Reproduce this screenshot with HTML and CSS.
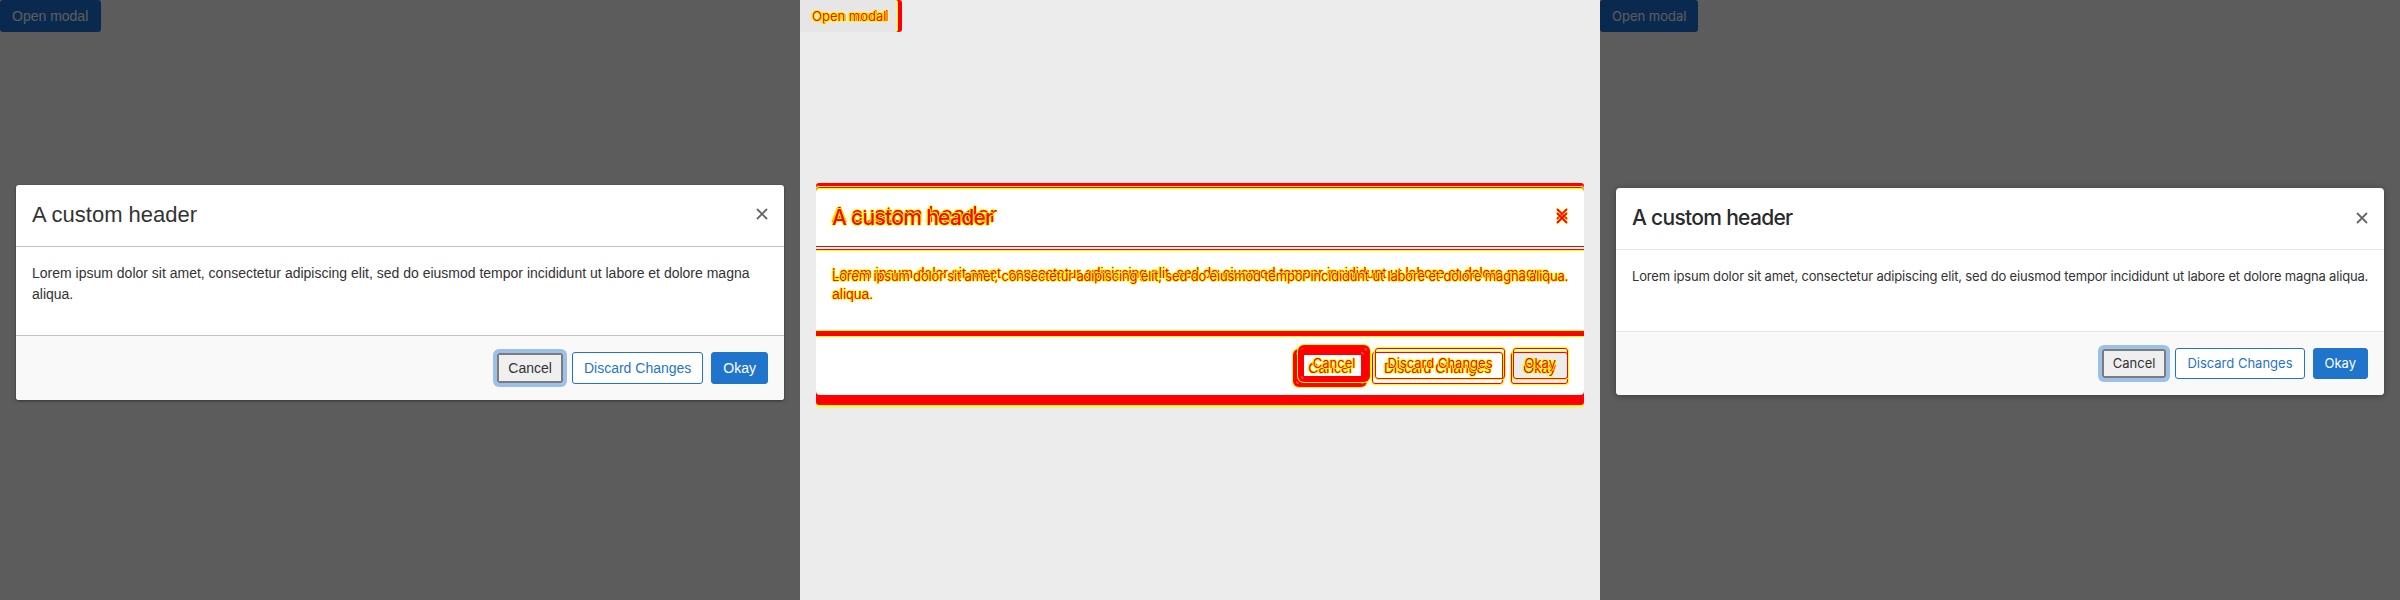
FILE: index.html
```html
<!DOCTYPE html>
<html lang="en">
<head>
<meta charset="utf-8">
<title>Modal visual diff</title>
<link rel="stylesheet" href="styles.css">
</head>
<body>
<div class="screen">

  <section class="panel v-expected">
    <div class="page"><button class="open-btn">Open modal</button></div>
    <div class="backdrop"></div>
    <div class="dialog-wrap">
      <div class="modal">
        <div class="modal-header">
          <h2 class="modal-title">A custom header</h2>
          <button class="close" aria-label="Close"><svg width="12" height="12" viewBox="0 0 12 12"><path d="M1.5 1.5l9 9M10.5 1.5l-9 9" stroke="currentColor" stroke-width="1.8" stroke-linecap="round" fill="none"/></svg></button>
        </div>
        <div class="modal-body"><p>Lorem ipsum dolor sit amet, consectetur adipiscing elit, sed do eiusmod tempor incididunt ut labore et dolore magna aliqua.</p></div>
        <div class="modal-footer">
          <button class="btn btn-cancel">Cancel</button>
          <button class="btn btn-outline">Discard Changes</button>
          <button class="btn btn-primary">Okay</button>
        </div>
      </div>
    </div>
  </section>

  <section class="panel panel-diff">
    <div class="layer diff v-expected diff-a">
      <div class="page"><button class="open-btn">Open modal</button></div>
      <div class="dialog-wrap">
        <div class="modal">
          <div class="modal-header">
            <h2 class="modal-title">A custom header</h2>
            <button class="close" aria-label="Close"><svg width="12" height="12" viewBox="0 0 12 12"><path d="M1.5 1.5l9 9M10.5 1.5l-9 9" stroke="currentColor" stroke-width="1.8" stroke-linecap="round" fill="none"/></svg></button>
          </div>
          <div class="modal-body"><p>Lorem ipsum dolor sit amet, consectetur adipiscing elit, sed do eiusmod tempor incididunt ut labore et dolore magna aliqua.</p></div>
          <div class="modal-footer">
            <button class="btn btn-cancel">Cancel</button>
            <button class="btn btn-outline">Discard Changes</button>
            <button class="btn btn-primary">Okay</button>
          </div>
        </div>
      </div>
    </div>
    <div class="layer diff v-actual diff-b">
      <div class="page"><button class="open-btn">Open modal</button></div>
      <div class="dialog-wrap">
        <div class="modal">
          <div class="modal-header">
            <h2 class="modal-title">A custom header</h2>
            <button class="close" aria-label="Close"><svg width="12" height="12" viewBox="0 0 12 12"><path d="M1.5 1.5l9 9M10.5 1.5l-9 9" stroke="currentColor" stroke-width="1.8" stroke-linecap="round" fill="none"/></svg></button>
          </div>
          <div class="modal-body"><p>Lorem ipsum dolor sit amet, consectetur adipiscing elit, sed do eiusmod tempor incididunt ut labore et dolore magna aliqua.</p></div>
          <div class="modal-footer">
            <button class="btn btn-cancel">Cancel</button>
            <button class="btn btn-outline">Discard Changes</button>
            <button class="btn btn-primary">Okay</button>
          </div>
        </div>
      </div>
    </div>
  </section>

  <section class="panel v-actual">
    <div class="page"><button class="open-btn">Open modal</button></div>
    <div class="backdrop"></div>
    <div class="dialog-wrap">
      <div class="modal">
        <div class="modal-header">
          <h2 class="modal-title">A custom header</h2>
          <button class="close" aria-label="Close"><svg width="12" height="12" viewBox="0 0 12 12"><path d="M1.5 1.5l9 9M10.5 1.5l-9 9" stroke="currentColor" stroke-width="1.8" stroke-linecap="round" fill="none"/></svg></button>
        </div>
        <div class="modal-body"><p>Lorem ipsum dolor sit amet, consectetur adipiscing elit, sed do eiusmod tempor incididunt ut labore et dolore magna aliqua.</p></div>
        <div class="modal-footer">
          <button class="btn btn-cancel">Cancel</button>
          <button class="btn btn-outline">Discard Changes</button>
          <button class="btn btn-primary">Okay</button>
        </div>
      </div>
    </div>
  </section>

</div>
</body>
</html>
```
FILE: styles.css
```css
* { box-sizing: border-box; }
html, body { margin: 0; padding: 0; }
body { width: 2400px; height: 600px; overflow: hidden; background: #5c5c5c; }

.screen { display: flex; width: 2400px; height: 600px; }

/* variants */
.v-expected {
  --font: "Liberation Sans", Arial, sans-serif;
  --fs: 14px;
  --title-fs: 22px;
  --title-ls: 0;
  --text-ls: 0;
  --text-wrap: normal;
  --top: 185px;
  --open-pr: 13px;
  --body-pb: 30px;
  --btn-h: 32px;
  --btn-px: 11px;
  --close-top: 7px;
  --rule: #c2c2c2;
  --radius: 3px;
  --shadow: 0 1px 3px rgba(0,0,0,.45);
}
.v-actual {
  --font: Inter, "Noto Sans", sans-serif;
  --fs: 13px;
  --title-fs: 21px;
  --title-ls: -0.7px;
  --text-ls: -0.17px;
  --text-wrap: nowrap;
  --top: 188px;
  --open-pr: 12px;
  --body-pb: 44px;
  --btn-h: 31px;
  --btn-px: 11px;
  --close-top: 8px;
  --rule: #e7e7e7;
  --radius: 4px;
  --shadow: 0 1px 6px rgba(0,0,0,.35);
}

.panel {
  width: 800px;
  height: 600px;
  flex: none;
  display: grid;
  grid-template-columns: minmax(0, 1fr);
  overflow: hidden;
  background: #fff;
  color: #333;
}
.panel, .layer {
  font-family: var(--font);
  font-size: var(--fs);
}
.panel > *, .layer > * { grid-area: 1 / 1; min-width: 0; }
.layer { display: grid; grid-template-columns: minmax(0, 1fr); }

.page { align-self: start; justify-self: start; }
.open-btn {
  display: block;
  height: 32px;
  padding: 0 var(--open-pr) 0 12px;
  border: 0;
  border-radius: 3px;
  background: #1b74d8;
  color: #fff;
  font: inherit;
}

.backdrop { background: rgba(0,0,0,.64); }

.dialog-wrap { align-self: start; padding: var(--top) 16px 0; }

.modal {
  background: #fff;
  border-radius: var(--radius);
  box-shadow: var(--shadow);
}
.modal-header {
  display: flex;
  justify-content: space-between;
  align-items: flex-start;
  padding: 16px 16px 17px;
  border-bottom: 1px solid var(--rule);
}
.modal-title {
  margin: 0;
  font-size: var(--title-fs);
  line-height: 28px;
  font-weight: 400;
  letter-spacing: var(--title-ls);
  color: #333;
}
.v-actual .modal-title { color: #2a2a2a; font-weight: 500; }
.close {
  display: block;
  margin-top: var(--close-top);
  width: 12px;
  height: 12px;
  padding: 0;
  border: 0;
  background: none;
  color: #666;
}
.close svg { display: block; }

.modal-body { padding: 16px 16px var(--body-pb); }
.modal-body p {
  margin: 0;
  line-height: 21px;
  letter-spacing: var(--text-ls);
  white-space: var(--text-wrap);
}

.modal-footer {
  display: flex;
  justify-content: flex-end;
  gap: 8px;
  padding: 16px;
  background: #f9f9f9;
  border-top: 1px solid var(--rule);
  border-radius: 0 0 var(--radius) var(--radius);
}

.btn {
  height: var(--btn-h);
  padding: 0 var(--btn-px);
  border: 1px solid;
  border-radius: 3px;
  font: inherit;
  line-height: 1;
}
.btn-cancel {
  background: #efefef;
  color: #333;
  border-color: #9bc1e9;
  box-shadow: inset 0 0 0 2px #7c7c7c, 0 0 0 3px #9bc1e9;
}
.btn-outline { background: #fff; color: #1f74cc; border-color: #1f74cc; }
.btn-primary { background: #1f74cc; color: #fff; border-color: #1f74cc; }

/* ---------- diff panel ---------- */
.panel-diff { background: #ececec; }

.diff { color: #f00; }
.diff .open-btn,
.diff .modal-title,
.diff .modal-body p,
.diff .btn {
  color: #f00;
  text-shadow: 1px 0 #ff0, -1px 0 #ff0, 0 1px #ff0, 0 -1px #ff0;
}
.diff .close { color: #f00; filter: drop-shadow(0 0 1px #ff0); }
.diff .modal { background: transparent; }
.diff .modal-header { border-bottom-color: #f00; }
.diff .modal-footer { background: transparent; border-top-color: #f00; }
.diff .btn { background: transparent; border-color: #f00; box-shadow: 0 0 0 1px #ff0; }
.diff .btn-cancel {
  box-shadow: inset 0 0 0 2px #f00, 0 0 0 3px #f00, 0 0 0 4px #ff0;
}

.diff-a .open-btn { background: #e6e6e6; }
.diff-a .modal {
  background: #fff;
  box-shadow: inset 0 1px 0 #f00, 0 -2px 0 #f00, 0 5px 0 #f00, 0 6px 0 #ff0, 0 8px 0 rgba(255,255,0,.55);
}
.diff-a .modal-footer {
  box-shadow: inset 0 1px 0 #ff0, 0 -4px 0 #f00, 0 -5px 0 #ff0;
}
.diff-a .btn-primary { background: #ececec; }

.diff-b .open-btn {
  background: transparent;
  box-shadow: inset -1px 0 0 #ff0, 4px 0 0 #f00;
}
.diff-b .modal {
  box-shadow: inset 0 1px 0 #ff0, 0 -1px 0 #f00, 0 -2px 0 #ff0, 0 9px 0 #f00;
}
.diff-b .modal-body { box-shadow: inset 0 1px 0 #ff0; }
```
